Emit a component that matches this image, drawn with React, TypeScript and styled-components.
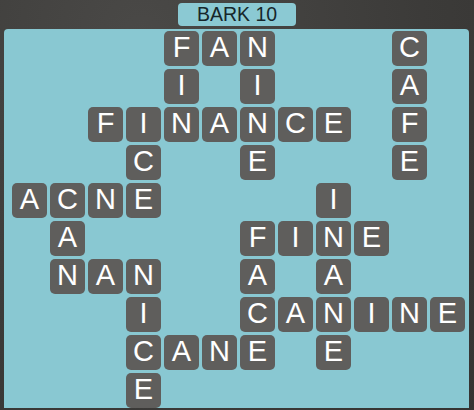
import React from 'react';
import styled, { createGlobalStyle } from 'styled-components';

const Global = createGlobalStyle`
	html, body {
		margin: 0;
		padding: 0;
		background: #3e3d3b;
		font-family: "Liberation Sans", Arial, sans-serif;
	}
`;

const Page = styled.div`
	width: 474px;
	height: 410px;
	display: flex;
	flex-direction: column;
	align-items: center;
	overflow: hidden;
	background: radial-gradient(ellipse at 30% 10%, #4a4947 0%, #3c3b39 60%, #353432 100%);
`;

const Title = styled.div`
	margin-top: 3px;
	width: 118px;
	height: 23px;
	border-radius: 4px;
	background: #8bc9d3;
	color: #16262b;
	font-size: 19.5px;
	display: flex;
	align-items: center;
	justify-content: center;
`;

const Board = styled.div`
	align-self: flex-start;
	margin: 3px 0 0 4px;
	width: 465px;
	height: 379px;
	box-sizing: border-box;
	padding: 2px 0 0 8px;
	background: #89c8d2;
	border-radius: 4px 4px 0 0;
	display: grid;
	grid-template-columns: repeat(12, 35px);
	grid-template-rows: repeat(10, 35px);
	gap: 3px;
`;

const Tile = styled.div<{ $row: number; $col: number }>`
	grid-row: ${(p) => p.$row + 1};
	grid-column: ${(p) => p.$col + 1};
	background: #5f5e5c;
	border-radius: 5px;
	color: #fff;
	font-size: 29px;
	line-height: 1;
	display: flex;
	align-items: center;
	justify-content: center;
	padding-bottom: 3px;
	box-sizing: border-box;
`;

// [row, startCol, letters, direction]
const words: [number, number, string, 'h' | 'v'][] = [
	[0, 4, 'FAN', 'h'],
	[0, 4, 'FIN', 'v'],
	[0, 6, 'NINE', 'v'],
	[0, 10, 'CAFE', 'v'],
	[2, 2, 'FINANCE', 'h'],
	[2, 3, 'ICE', 'v'],
	[4, 0, 'ACNE', 'h'],
	[4, 1, 'CAN', 'v'],
	[6, 1, 'NAN', 'h'],
	[6, 3, 'NICE', 'v'],
	[8, 3, 'CANE', 'h'],
	[4, 8, 'INANE', 'v'],
	[5, 6, 'FINE', 'h'],
	[5, 6, 'FACE', 'v'],
	[7, 6, 'CANINE', 'h'],
];

const cells = new Map<string, { row: number; col: number; ch: string }>();
words.forEach(([row, col, text, dir]) => {
	text.split('').forEach((ch, i) => {
		const r = dir === 'v' ? row + i : row;
		const c = dir === 'h' ? col + i : col;
		cells.set(`${r}-${c}`, { row: r, col: c, ch });
	});
});

export default function App() {
	return (
		<>
			<Global />
			<Page>
				<Title>BARK 10</Title>
				<Board>
					{[...cells.entries()].map(([key, cell]) => (
						<Tile key={key} $row={cell.row} $col={cell.col}>
							{cell.ch}
						</Tile>
					))}
				</Board>
			</Page>
		</>
	);
}
